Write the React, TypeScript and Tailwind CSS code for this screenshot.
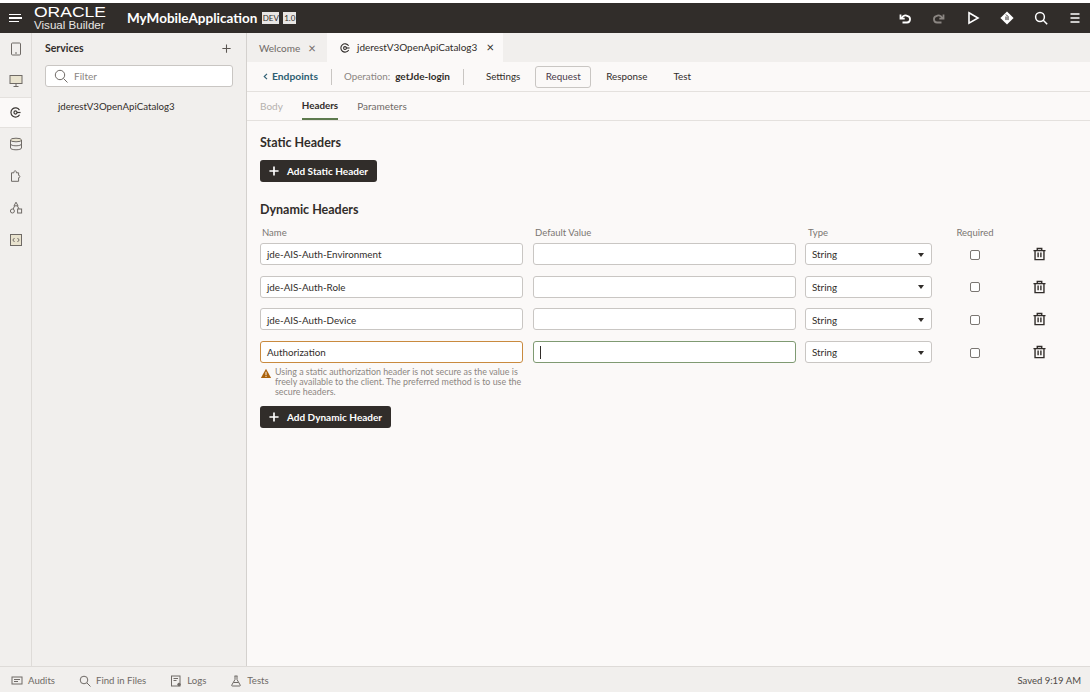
const font = { fontFamily: "Lato, 'Noto Sans', sans-serif" };

type IconProps = { className?: string };

function Plus({ className = "", width = 1.4 }: IconProps & { width?: number }) {
  return (
    <svg viewBox="0 0 12 12" className={className} fill="none" stroke="currentColor" strokeWidth={width}>
      <path d="M6 .5v11M.5 6h11" />
    </svg>
  );
}

function ServiceIcon({ className = "" }: IconProps) {
  return (
    <svg viewBox="0 0 12 12" className={className} fill="none" stroke="currentColor" strokeWidth="1.3">
      <path d="M10.3 3.4A5 5 0 1 0 10.4 8.4" />
      <path d="M6 4.3a1.7 1.7 0 1 0 0 3.4 1.7 1.7 0 0 0 0-3.4z" />
      <path d="M7.5 6H11.5" />
    </svg>
  );
}

function RailIcon({ name }: { name: string }) {
  const common = { viewBox: "0 0 14 14", className: "w-[14px] h-[14px]", fill: "none", stroke: "#6f6a66", strokeWidth: 1 };
  if (name === "phone")
    return (
      <svg {...common}>
        <rect x="2.5" y="1" width="9" height="12" rx="1" />
        <path d="M6 11h2" />
      </svg>
    );
  if (name === "desktop")
    return (
      <svg {...common}>
        <rect x="1" y="1.5" width="12" height="8" fill="#e9e3cf" />
        <path d="M7 9.5v3M4.5 12.5h5" />
      </svg>
    );
  if (name === "service") return <ServiceIcon className="w-[11px] h-[11px] text-[#3b3733]" />;
  if (name === "data")
    return (
      <svg {...common}>
        <ellipse cx="7" cy="3" rx="5.5" ry="1.8" fill="#e9e3cf" />
        <path d="M1.5 3v8c0 1 2.4 1.8 5.5 1.8s5.5-.8 5.5-1.8V3M1.5 7c0 1 2.4 1.8 5.5 1.8s5.5-.8 5.5-1.8" />
      </svg>
    );
  if (name === "puzzle")
    return (
      <svg {...common}>
        <path d="M2.5 3.8h2.4c-.5-2.6 3-2.6 2.5 0h2.2v2.6c1.7-.3 1.7 2.6 0 2.3v3.6H2.5z" />
      </svg>
    );
  if (name === "shapes")
    return (
      <svg {...common}>
        <path d="M7 1.2 9 4.8H5z" />
        <circle cx="3.4" cy="10" r="2" />
        <rect x="8.6" y="8" width="4" height="4" />
        <path d="M5.5 5 4.2 8M8.5 5 10 8" />
      </svg>
    );
  return (
    <svg {...common}>
      <rect x="1.5" y="1.5" width="11" height="11" fill="#e9e3cf" />
      <path d="M5.5 5 3.8 7l1.7 2M8.5 5l1.7 2-1.7 2" />
    </svg>
  );
}

function Trash() {
  return (
    <svg viewBox="0 0 14 14" className="w-[13px] h-[14px]" fill="none" stroke="#312d2a" strokeWidth="1.5">
      <path d="M.5 3.4h13M4.6 3.2V1h4.8v2.2M2.2 3.6V13h9.6V3.6" />
      <path d="M5.5 5.5v5M8.5 5.5v5" />
    </svg>
  );
}

function TextBox({ value, cls = "border-[#c9c6c3]", caret = false }: { value: string; cls?: string; caret?: boolean }) {
  return (
    <div className={`h-[22px] pt-px flex items-center px-[6px] bg-white rounded-[3px] border text-[9.8px] text-[#312d2a] ${cls}`}>
      {value}
      {caret && <span className="w-px h-[13px] bg-[#312d2a]" />}
    </div>
  );
}

const cols = "grid grid-cols-[273px_272px_136px_68px_60px]";

function Row({ name, nameCls, valueCls, caret }: { name: string; nameCls?: string; valueCls?: string; caret?: boolean }) {
  return (
    <div className={`${cols} items-center`}>
      <div className="w-[263px]">
        <TextBox value={name} cls={nameCls} />
      </div>
      <div className="w-[263px]">
        <TextBox value="" cls={valueCls} caret={caret} />
      </div>
      <div className="w-[127px] h-[22px] pt-px flex items-center justify-between pl-[6px] pr-[7px] bg-white rounded-[3px] border border-[#c9c6c3] text-[9.8px] text-[#312d2a]">
        String
        <span className="w-0 h-0 border-x-[3.5px] border-x-transparent border-t-[4px] border-t-[#312d2a]" />
      </div>
      <div className="flex justify-center pt-px">
        <span className="w-[10px] h-[10px] rounded-[2px] border border-[#7a7672] bg-white" />
      </div>
      <div className="flex justify-center">
        <Trash />
      </div>
    </div>
  );
}

function DarkButton({ label }: { label: string }) {
  return (
    <button className="h-[22px] pl-[9px] pr-[9px] flex items-center gap-[8px] rounded-[3px] bg-[#312d2a] text-white text-[10px] font-bold w-fit">
      <Plus className="w-[10px] h-[10px]" width={2} />
      {label}
    </button>
  );
}

function FooterItem({ label, icon }: { label: string; icon: React.ReactNode }) {
  return (
    <div className="flex items-center gap-[5px] text-[9.6px] text-[#6f6a66]">
      {icon}
      {label}
    </div>
  );
}

export default function App() {
  const footerIcon = { viewBox: "0 0 12 12", className: "w-[12px] h-[12px]", fill: "none", stroke: "#6f6a66", strokeWidth: 1 };

  return (
    <div style={font} className="w-[1092px] h-[693px] bg-white flex flex-col pt-[3px] pr-[2px] pb-px overflow-hidden">
      {/* top bar */}
      <header className="h-[30px] shrink-0 bg-[#312d2a] flex items-center text-white">
        <div className="w-[34px] pl-[9px] flex flex-col items-start gap-[2px]">
          <span className="w-[12px] h-[1.5px] bg-white" />
          <span className="w-[13px] h-[1.5px] bg-white" />
          <span className="w-[10px] h-[1.5px] bg-white" />
        </div>
        <div className="w-[93px] leading-none" style={{ fontFamily: "'Liberation Sans', sans-serif" }}>
          <div className="text-[14px] leading-[12px] origin-left scale-x-125">ORACLE</div>
          <div className="text-[11.6px] leading-[13px] text-[#e8e6e4]">Visual Builder</div>
        </div>
        <div className="text-[13.5px] font-bold">MyMobileApplication</div>
        <span className="ml-[5px] w-[17px] h-[12px] flex items-center justify-center bg-[#e8e6e4] text-[#312d2a] text-[8px] leading-none">DEV</span>
        <span className="ml-[4px] w-[13px] h-[12px] flex items-center justify-center bg-[#e8e6e4] text-[#312d2a] text-[8px] leading-none">1.0</span>
        <div className="ml-auto flex items-center pr-[8px] gap-[20px]">
          <svg viewBox="0 0 14 14" className="w-[14px] h-[14px]" fill="none" stroke="white" strokeWidth="1.8">
            <path d="M4.5 11.5h4.5a3.2 3.2 0 0 0 .6-6.3 3.6 3.6 0 0 0-5.6 1.6M2.5 3.5v4.2h4.2" />
          </svg>
          <svg viewBox="0 0 14 14" className="w-[14px] h-[14px]" fill="none" stroke="#8b8682" strokeWidth="1.8">
            <path d="M9.5 11.5H5a3.2 3.2 0 0 1-.6-6.3 3.6 3.6 0 0 1 5.6 1.6M11.5 3.5v4.2H7.3" />
          </svg>
          <svg viewBox="0 0 14 14" className="w-[14px] h-[14px]" fill="none" stroke="white" strokeWidth="1.6">
            <path d="M3 1.8 12 7l-9 5.2z" />
          </svg>
          <svg viewBox="0 0 14 14" className="w-[14px] h-[14px]">
            <path d="M7 .4 13.6 7 7 13.6.4 7z" fill="white" />
            <path d="M6 3.5 8 5.5v3.6M6 5.5v3.6" stroke="#312d2a" strokeWidth="1" fill="none" />
          </svg>
          <svg viewBox="0 0 14 14" className="w-[14px] h-[14px]" fill="none" stroke="white" strokeWidth="1.5">
            <circle cx="6" cy="6" r="4.4" />
            <path d="M9 9l4.2 4.2" />
          </svg>
          <svg viewBox="0 0 14 14" className="w-[14px] h-[14px]" fill="none" stroke="white" strokeWidth="1.6">
            <path d="M2.5 3h9M2.5 7h9M2.5 11h9" />
          </svg>
        </div>
      </header>

      <div className="flex-1 flex min-h-0">
        {/* icon rail */}
        <nav className="w-[32px] shrink-0 bg-[#f1efed] border-r border-[#dedbd8] flex flex-col items-center">
          {["phone", "desktop", "service", "data", "puzzle", "shapes", "code"].map((n) => (
            <div
              key={n}
              className={`w-full h-[31.8px] flex items-center justify-center ${
                n === "service" ? "bg-[#fbf9f8] border-y border-[#e4e1de]" : ""
              }`}
            >
              <RailIcon name={n} />
            </div>
          ))}
        </nav>

        {/* services panel */}
        <aside className="w-[215px] shrink-0 bg-[#f1efed] border-r border-[#d4d1ce] px-[13px]">
          <div className="h-[29px] pt-[2px] flex items-center justify-between text-[10.5px] font-bold text-[#312d2a]">
            Services
            <Plus className="w-[9px] h-[9px] mr-[2px] text-[#5b5652]" />
          </div>
          <div className="h-[22px] mt-[3px] flex items-center gap-[6px] px-[8px] bg-white border border-[#c9c6c3] rounded-[3px] text-[10px] text-[#8b8682]">
            <svg viewBox="0 0 14 14" className="w-[14px] h-[14px]" fill="none" stroke="#6f6a66" strokeWidth="1">
              <circle cx="6" cy="6" r="4.7" />
              <path d="M9.5 9.5l4 4" />
            </svg>
            Filter
          </div>
          <div className="mt-[12px] pl-[13px] text-[9.7px] text-[#312d2a]">jderestV3OpenApiCatalog3</div>
        </aside>

        {/* editor */}
        <main className="flex-1 min-w-0 flex flex-col bg-[#fbf9f8]">
          <div className="h-[29px] shrink-0 flex bg-[#f1efed] text-[10px]">
            <div className="w-[80px] pt-[2px] flex items-center pl-[12px] gap-[8px] text-[#6f6a66]">
              Welcome <span className="text-[13px] leading-none">×</span>
            </div>
            <div className="w-[176px] flex items-center pl-[13px] gap-[7px] bg-[#fbf9f8] text-[#312d2a]">
              <ServiceIcon className="w-[10px] h-[10px]" />
              jderestV3OpenApiCatalog3
              <span className="ml-[2px] text-[13px] leading-none">×</span>
            </div>
          </div>

          <div className="h-[30px] shrink-0 border-b border-[#e4e1de] flex items-center text-[9.8px]">
            <div className="pl-[16px] pr-[13px] h-[16px] border-r border-[#c9c6c3] flex items-center gap-[4px] font-bold text-[10.3px] text-[#2f5f73]">
              <svg viewBox="0 0 6 8" className="w-[5px] h-[7px]" fill="none" stroke="currentColor" strokeWidth="1.4">
                <path d="M4.8 .8 1.5 4l3.3 3.2" />
              </svg>
              Endpoints
            </div>
            <div className="pl-[12px] pr-[13px] h-[16px] border-r border-[#c9c6c3] flex items-center gap-[5px]">
              <span className="text-[#8b8682]">Operation:</span>
              <span className="font-bold text-[#312d2a] text-[10px]">getJde-login</span>
            </div>
            <span className="ml-[22px] text-[#312d2a]">Settings</span>
            <span className="ml-[15px] h-[22px] w-[56px] justify-center flex items-center rounded-[3px] border border-[#c9c6c3] text-[#4a3a4a]">Request</span>
            <span className="ml-[15px] text-[#312d2a]">Response</span>
            <span className="ml-[26px] text-[#312d2a]">Test</span>
          </div>

          <div className="h-[29px] shrink-0 border-b border-[#e4e1de] flex items-stretch pl-[13px] gap-[19px] text-[10px]">
            <span className="flex items-center text-[#b5b1ad]">Body</span>
            <span className="flex items-center font-bold text-[9.8px] text-[#312d2a] border-b-2 border-[#5d7a4e]">Headers</span>
            <span className="flex items-center text-[#6f6a66]">Parameters</span>
          </div>

          <section className="pl-[13px] flex-1 flex flex-col">
            <h2 className="mt-[14px] text-[12.5px] leading-[16px] font-bold text-[#312d2a]">Static Headers</h2>
            <div className="mt-[9px]">
              <DarkButton label="Add Static Header" />
            </div>
            <h2 className="mt-[20px] text-[12.5px] leading-[16px] font-bold text-[#312d2a]">Dynamic Headers</h2>
            <div className={`${cols} mt-[9px] text-[9.5px] leading-[12px] text-[#7a7672]`}>
              <span className="pl-[2px]">Name</span>
              <span className="pl-[2px]">Default Value</span>
              <span className="pl-[3px]">Type</span>
              <span className="text-center">Required</span>
              <span />
            </div>
            <div className="mt-[4px] flex flex-col gap-[10.7px]">
              <Row name="jde-AIS-Auth-Environment" />
              <Row name="jde-AIS-Auth-Role" />
              <Row name="jde-AIS-Auth-Device" />
              <Row name="Authorization" nameCls="border-[#c98a3e]" valueCls="border-[#7f9a72]" caret />
            </div>
            <div className="mt-[4px] w-[266px] flex gap-[3px]">
              <svg viewBox="0 0 12 12" className="w-[12px] h-[11px] shrink-0 mt-[1px]">
                <path d="M6 .8 11.6 11H.4z" fill="#ac630c" />
                <path d="M6 4.2v3.6M6 8.6v1.2" stroke="white" strokeWidth="1" />
              </svg>
              <p className="text-[8.9px] leading-[10px] text-[#8b8682]">
                Using a static authorization header is not secure as the value is freely available to the client. The preferred method is to use the secure headers.
              </p>
            </div>
            <div className="mt-[9px]">
              <DarkButton label="Add Dynamic Header" />
            </div>
          </section>
        </main>
      </div>

      {/* status bar */}
      <footer className="h-[26px] shrink-0 pt-[3px] bg-[#f1efed] border-t border-[#dedbd8] flex items-center pl-[11px] pr-[9px] gap-[24px]">
        <FooterItem
          label="Audits"
          icon={
            <svg {...footerIcon}>
              <rect x="1" y="2" width="10" height="7" />
              <path d="M3 4.5h6M3 6.5h4" />
            </svg>
          }
        />
        <FooterItem
          label="Find in Files"
          icon={
            <svg {...footerIcon}>
              <circle cx="5" cy="5" r="3.8" />
              <path d="M8 8l3.5 3.5" />
            </svg>
          }
        />
        <FooterItem
          label="Logs"
          icon={
            <svg {...footerIcon}>
              <rect x="1.5" y="1" width="8.5" height="10" />
              <path d="M3.5 3.5h4.5M3.5 5.5h3" />
              <circle cx="9" cy="9.5" r="1.3" fill="#6f6a66" />
            </svg>
          }
        />
        <FooterItem
          label="Tests"
          icon={
            <svg {...footerIcon}>
              <path d="M4.5 1h3M5 1v3.5L1.8 10a.7.7 0 0 0 .6 1h7.2a.7.7 0 0 0 .6-1L7 4.5V1M3.5 7.5h5" />
            </svg>
          }
        />
        <span className="ml-auto text-[9.5px] text-[#4f4a46]">Saved 9:19 AM</span>
      </footer>
    </div>
  );
}
